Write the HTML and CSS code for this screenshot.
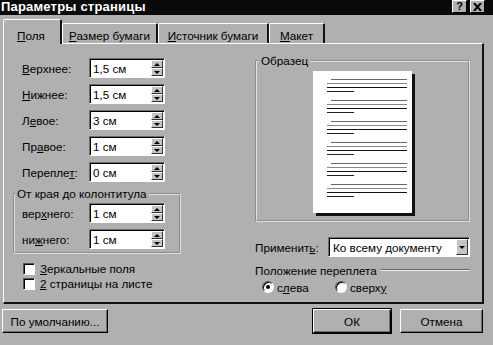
FILE: index.html
```html
<!DOCTYPE html>
<html lang="ru">
<head>
<meta charset="utf-8">
<title>Параметры страницы</title>
<link rel="stylesheet" href="styles.css">
</head>
<body>
<div class="dialog">
  <div class="titlebar">
    <span class="title">Параметры страницы</span>
    <div class="tb-buttons">
      <span class="tb-btn tb-help">?</span>
      <span class="tb-btn tb-close"><svg width="9" height="8" viewBox="0 0 9 8"><path d="M1 0 L8 8 M8 0 L1 8" stroke="#000" stroke-width="2"/></svg></span>
    </div>
  </div>

  <div class="tabs">
    <div class="tab tab-active tab-w1"><u>П</u>оля</div>
    <div class="tab tab-w2"><u>Р</u>азмер бумаги</div>
    <div class="tab tab-w3"><u>И</u>сточник бумаги</div>
    <div class="tab tab-w4"><u>М</u>акет</div>
  </div>

  <div class="panel">
    <div class="col-left">
      <div class="row"><span class="lbl"><u>В</u>ерхнее:</span><div class="spin"><span class="val">1,5 см</span><span class="spinbtn"><span class="sb up"></span><span class="sb down"></span></span></div></div>
      <div class="row"><span class="lbl"><u>Н</u>ижнее:</span><div class="spin"><span class="val">1,5 см</span><span class="spinbtn"><span class="sb up"></span><span class="sb down"></span></span></div></div>
      <div class="row"><span class="lbl">Л<u>е</u>вое:</span><div class="spin"><span class="val">3 см</span><span class="spinbtn"><span class="sb up"></span><span class="sb down"></span></span></div></div>
      <div class="row"><span class="lbl">Пр<u>а</u>вое:</span><div class="spin"><span class="val">1 см</span><span class="spinbtn"><span class="sb up"></span><span class="sb down"></span></span></div></div>
      <div class="row"><span class="lbl">Перепле<u>т</u>:</span><div class="spin"><span class="val">0 см</span><span class="spinbtn"><span class="sb up"></span><span class="sb down"></span></span></div></div>

      <fieldset class="group">
        <legend>От края до колонтитула</legend>
        <div class="row row-in"><span class="lbl">вер<u>х</u>него:</span><div class="spin"><span class="val">1 см</span><span class="spinbtn"><span class="sb up"></span><span class="sb down"></span></span></div></div>
        <div class="row row-in row-last"><span class="lbl">ни<u>ж</u>него:</span><div class="spin"><span class="val">1 см</span><span class="spinbtn"><span class="sb up"></span><span class="sb down"></span></span></div></div>
      </fieldset>

      <div class="check check-first"><span class="box"></span><span><u>З</u>еркальные поля</span></div>
      <div class="check"><span class="box"></span><span><u>2</u> страницы на листе</span></div>
    </div>

    <div class="col-right">
      <fieldset class="sample">
        <legend>Образец</legend>
        <div class="sample-body">
          <div class="page">
            <div class="pg-group"><div class="ln ln1"></div><div class="ln ln2"></div><div class="ln ln3"></div><div class="ln ln4"></div></div>
            <div class="pg-group"><div class="ln ln1"></div><div class="ln ln2"></div><div class="ln ln3"></div><div class="ln ln4"></div></div>
            <div class="pg-group"><div class="ln ln1"></div><div class="ln ln2"></div><div class="ln ln3"></div><div class="ln ln4"></div></div>
            <div class="pg-group"><div class="ln ln1"></div><div class="ln ln2"></div><div class="ln ln3"></div><div class="ln ln4"></div></div>
            <div class="pg-group"><div class="ln ln1"></div><div class="ln ln2"></div><div class="ln ln3"></div><div class="ln ln4"></div></div>
            <div class="pg-group"><div class="ln ln1"></div><div class="ln ln2"></div><div class="ln ln3"></div><div class="ln ln4"></div></div>
          </div>
        </div>
      </fieldset>

      <div class="apply">
        <span class="apply-lbl">Применит<u>ь</u>:</span>
        <div class="select"><span class="val">Ко всему документу</span><span class="dropbtn"><span class="tri-down"></span></span></div>
      </div>

      <div class="binding-title"><span>Положение переплета</span><span class="hline"></span></div>
      <div class="radios">
        <div class="radio radio-first"><span class="circle checked"></span><span>с<u>л</u>ева</span></div>
        <div class="radio"><span class="circle"></span><span>сверх<u>у</u></span></div>
      </div>
    </div>
  </div>

  <div class="footer">
    <div class="btn btn-default-set">По умолчанию...</div>
    <div class="btn-right">
      <div class="btn btn-ok">ОК</div>
      <div class="btn btn-cancel">Отмена</div>
    </div>
  </div>
</div>
</body>
</html>
```
FILE: styles.css
```css
* { box-sizing: border-box; }
html, body { margin: 0; padding: 0; }
body {
  width: 493px;
  height: 345px;
  overflow: hidden;
  background: #b0b0b0;
  font-family: "Liberation Sans", Arial, sans-serif;
  font-size: 11.7px;
  color: #000;
}
u { text-decoration: underline; text-underline-offset: 1px; }

.dialog { width: 493px; height: 345px; display: flex; flex-direction: column; }

/* title bar */
.titlebar {
  height: 15px;
  background: #0a0a0a;
  display: flex;
  align-items: flex-start;
  justify-content: space-between;
  padding: 0 8px 0 1px;
}
.title { color: #fff; font-weight: bold; font-size: 13px; line-height: 14px; letter-spacing: 0.2px; }
.tb-buttons { display: flex; gap: 3px; }
.tb-btn {
  width: 15px;
  height: 13px;
  background: #b0b0b0;
  border: 1px solid;
  border-color: #fff #000 #000 #fff;
  display: flex;
  align-items: center;
  justify-content: center;
  font-weight: bold;
  font-size: 11px;
  line-height: 11px;
}

/* tabs */
.tabs {
  height: 28px;
  display: flex;
  align-items: flex-end;
  padding-left: 3px;
}
.tab {
  height: 20px;
  border-top: 1px solid #fff;
  border-left: 1px solid #fff;
  border-right: 2px solid #111;
  border-radius: 2px 2px 0 0;
  padding-top: 5px;
  line-height: 14px;
  text-align: center;
  white-space: nowrap;
}
.tab-active {
  height: 25px;
  padding-top: 9px;
  margin-bottom: -1px;
  background: #b0b0b0;
  position: relative;
  z-index: 2;
}
.tab-w1 { width: 59px; text-align: left; padding-left: 13px; }
.tab-w2 { width: 96px; }
.tab-w3 { width: 111px; }
.tab-w4 { width: 56px; }

/* panel */
.panel {
  margin: 0 9px 0 3px;
  height: 261px;
  border-top: 1px solid #fff;
  border-left: 1px solid #fff;
  border-right: 2px solid #111;
  border-bottom: 2px solid #111;
  display: flex;
  padding: 14px 0 0 9px;
  gap: 74px;
}

.col-left { width: 168px; display: flex; flex-direction: column; }
.col-right { width: 215px; display: flex; flex-direction: column; margin-top: -3px; }

.row { display: flex; align-items: center; height: 20px; margin-bottom: 6px; padding-left: 9px; }
.row-in { padding-left: 0; }
.row-last { margin-bottom: 0; }
.lbl { width: 67px; white-space: nowrap; }

.spin {
  width: 76px;
  height: 20px;
  background: #fff;
  border: 1px solid;
  border-color: #6e6e6e #fff #fff #6e6e6e;
  box-shadow: inset 1px 1px 0 #000;
  display: flex;
  align-items: stretch;
  justify-content: space-between;
  padding: 1px 1px 1px 3px;
}
.val { line-height: 17px; white-space: nowrap; }
.spinbtn { width: 12px; display: flex; flex-direction: column; }
.sb {
  flex: 1;
  background: #c4c4c4;
  border: 1px solid;
  border-color: #fff #333 #333 #fff;
  display: flex;
  align-items: center;
  justify-content: center;
}
.sb::after { content: ""; width: 0; height: 0; border-left: 3px solid transparent; border-right: 3px solid transparent; }
.up::after { border-bottom: 3px solid #000; }
.down::after { border-top: 3px solid #000; }

/* fieldsets */
fieldset { margin: 0; min-width: 0; }
.group {
  width: 168px;
  margin-top: 0;
  border: 2px groove #e0e0e0;
  padding: 3px 0 3px 7px;
}
.group legend { padding: 0 2px; margin-left: -7px; line-height: 12px; }

.check { display: flex; align-items: center; height: 15px; padding-left: 10px; gap: 5px; white-space: nowrap; }
.check-first { margin-top: 7px; }
.box {
  width: 12px;
  height: 12px;
  background: #fff;
  border: 1px solid;
  border-color: #555 #fff #fff #555;
  box-shadow: inset 1px 1px 0 #000;
}

.sample {
  width: 215px;
  height: 167px;
  border: 2px groove #e0e0e0;
  padding: 0;
}
.sample legend { padding: 0 2px; margin-left: 2px; line-height: 12px; }
.sample-body { display: flex; justify-content: center; padding-top: 4px; }
.page {
  width: 99px;
  height: 142px;
  background: #fff;
  box-shadow: 3px 3px 0 #111;
  padding: 8px 5px 0 14px;
}
.pg-group { margin-bottom: 8px; }
.ln { height: 1px; margin-bottom: 3px; }
.ln4 { margin-bottom: 0; width: 27px; background: #222; }
.ln1 { margin-left: 4px; background: #666; }
.ln2 { background: #888; }
.ln3 { background: #111; }

.apply { display: flex; align-items: center; height: 20px; margin-top: 15px; }
.apply-lbl { width: 73px; white-space: nowrap; }
.select {
  width: 142px;
  height: 20px;
  background: #fff;
  border: 1px solid;
  border-color: #6e6e6e #fff #fff #6e6e6e;
  box-shadow: inset 1px 1px 0 #000;
  display: flex;
  justify-content: space-between;
  padding: 1px 1px 1px 4px;
}
.dropbtn {
  width: 12px;
  background: #c4c4c4;
  border: 1px solid;
  border-color: #fff #333 #333 #fff;
  display: flex;
  align-items: center;
  justify-content: center;
}
.tri-down { width: 0; height: 0; border-left: 3px solid transparent; border-right: 3px solid transparent; border-top: 3px solid #000; }

.binding-title { display: flex; align-items: center; height: 14px; margin-top: 6px; gap: 4px; white-space: nowrap; }
.hline { flex: 1; height: 2px; border-top: 1px solid #666; border-bottom: 1px solid #eee; }

.radios { display: flex; height: 14px; margin-top: 3px; padding-left: 7px; align-items: center; }
.radio { display: flex; align-items: center; gap: 3px; white-space: nowrap; }
.radio-first { width: 73px; }
.circle {
  width: 12px;
  height: 12px;
  border-radius: 50%;
  background: #fff;
  border: 1px solid;
  border-color: #555 #fff #fff #555;
  box-shadow: inset 1px 1px 0 #000;
  display: flex;
  align-items: center;
  justify-content: center;
}
.checked::after { content: ""; width: 4px; height: 4px; border-radius: 50%; background: #000; }

/* footer */
.footer { display: flex; justify-content: space-between; padding: 5px 10px 0 2px; }
.btn-right { display: flex; gap: 9px; }
.btn {
  height: 24px;
  border: 1px solid;
  border-color: #fff #000 #000 #fff;
  box-shadow: inset -1px -1px 0 #6e6e6e;
  display: flex;
  align-items: center;
  justify-content: center;
  white-space: nowrap;
}
.btn-default-set { width: 106px; }
.btn-ok { width: 78px; box-shadow: inset -1px -1px 0 #6e6e6e, 0 0 0 1px #000; }
.btn-cancel { width: 83px; }
```
